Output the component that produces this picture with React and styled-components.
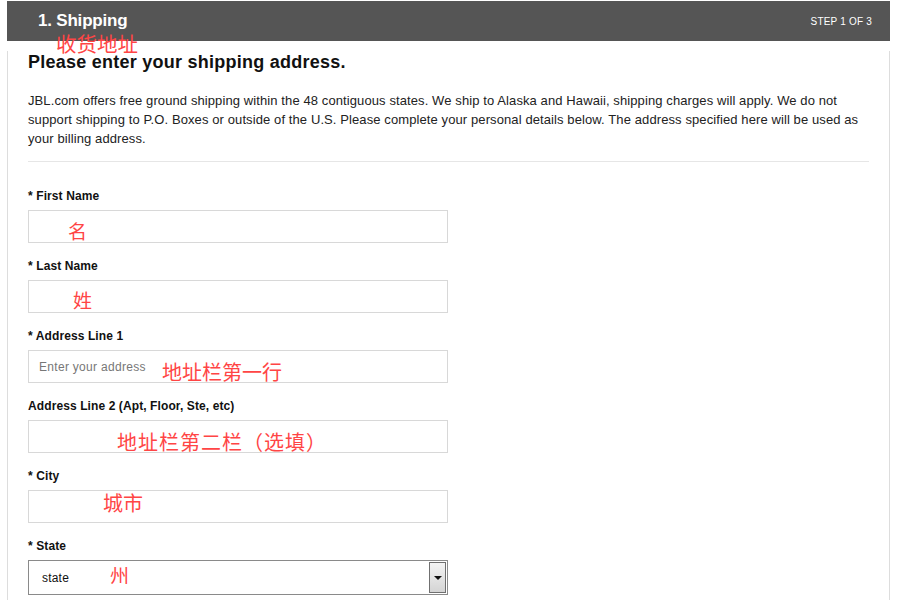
import React from 'react';
import styled, { createGlobalStyle } from 'styled-components';

const GlobalStyle = createGlobalStyle`
  html, body {
    margin: 0;
    padding: 0;
    background: #fff;
  }
  body {
    font-family: "Liberation Sans", Arial, sans-serif;
    color: #1a1a1a;
  }
`;

const Page = styled.div`
  width: 883px;
  margin: 1px 0 0 7px;
`;

const Header = styled.div`
  height: 40px;
  background: #555;
  color: #fff;
  display: flex;
  align-items: center;
  justify-content: space-between;
  padding: 0 18px 0 31px;
  position: relative;
`;

const Title = styled.h2`
  margin: 0;
  font-size: 17px;
  font-weight: bold;
  letter-spacing: -0.2px;
`;

const Step = styled.span`
  font-size: 10px;
  letter-spacing: 0.2px;
`;

const Body = styled.div`
  border-left: 1px solid #ddd;
  border-right: 1px solid #ddd;
  padding: 0 20px 20px;
  position: relative;
`;

const Heading = styled.h1`
  margin: 10px 0 0;
  font-size: 18px;
  line-height: 22px;
  font-weight: bold;
  letter-spacing: 0.25px;
  color: #111;
`;

const Intro = styled.p`
  margin: 18px 0 0;
  font-size: 13px;
  line-height: 19px;
  color: #222;
  letter-spacing: 0.1px;
  white-space: nowrap;
`;

const Divider = styled.hr`
  margin: 13px 0 0;
  border: 0;
  border-top: 1px solid #e6e6e6;
`;

const Form = styled.form`
  margin-top: 26px;
  display: flex;
  flex-direction: column;
  gap: 15px;
`;

const Field = styled.div`
  position: relative;
  width: 420px;
  display: flex;
  flex-direction: column;
  gap: 6px;
`;

const Label = styled.label`
  font-size: 12px;
  line-height: 16px;
  font-weight: bold;
  letter-spacing: 0.1px;
  color: #111;
`;

const Input = styled.input`
  box-sizing: border-box;
  width: 420px;
  height: 33px;
  border: 1px solid #d8d8d8;
  padding: 0 10px;
  font-family: "Liberation Sans", Arial, sans-serif;
  font-size: 12px;
  letter-spacing: 0.3px;
  color: #222;
  outline: none;

  &::placeholder {
    color: #777;
  }
`;

const Select = styled.div`
  box-sizing: border-box;
  width: 420px;
  height: 35px;
  border: 1px solid #8a8a8a;
  display: flex;
  align-items: stretch;
  font-size: 12px;
  color: #111;
`;

const SelectValue = styled.span`
  flex: 1;
  display: flex;
  align-items: center;
  padding-left: 13px;
  letter-spacing: 0.2px;
`;

const SelectButton = styled.span`
  width: 15px;
  margin: 1px;
  border: 1px solid #707070;
  background: linear-gradient(#f4f4f4, #d4d4d4);
  display: flex;
  align-items: center;
  justify-content: center;

  &::after {
    content: '';
    border-left: 4px solid transparent;
    border-right: 4px solid transparent;
    border-top: 4px solid #111;
  }
`;

const Note = styled.span`
  position: absolute;
  left: ${({ x }) => x}px;
  top: ${({ y }) => y}px;
  font-family: "Noto Sans CJK SC", sans-serif;
  font-size: ${({ size }) => size || 20}px;
  letter-spacing: ${({ spacing }) => spacing || 0}px;
  line-height: 1;
  color: #ff4545;
  pointer-events: none;
  white-space: nowrap;
`;

const fields = [
  { label: '* First Name', note: '名', x: 40, y: 33, size: 19 },
  { label: '* Last Name', note: '姓', x: 45, y: 32, size: 19 },
  { label: '* Address Line 1', note: '地址栏第一行', x: 134, y: 34, placeholder: 'Enter your address' },
  { label: 'Address Line 2 (Apt, Floor, Ste, etc)', note: '地址栏第二栏（选填）', x: 89, y: 34, spacing: 1 },
  { label: '* City', note: '城市', x: 75, y: 25 },
];

const App = () => (
  <Page>
    <GlobalStyle />
    <Header>
      <Title>1. Shipping</Title>
      <Step>STEP 1 OF 3</Step>
      <Note x={49} y={32} size={20.5}>收货地址</Note>
    </Header>
    <Body>
      <Heading>Please enter your shipping address.</Heading>
      <Intro>
        JBL.com offers free ground shipping within the 48 contiguous states. We ship to Alaska and Hawaii, shipping charges will apply. We do not
        <br />
        support shipping to P.O. Boxes or outside of the U.S. Please complete your personal details below. The address specified here will be used as
        <br />
        your billing address.
      </Intro>
      <Divider />
      <Form>
        {fields.map((f) => (
          <Field key={f.label}>
            <Label>{f.label}</Label>
            <Input placeholder={f.placeholder} />
            <Note x={f.x} y={f.y} size={f.size} spacing={f.spacing}>{f.note}</Note>
          </Field>
        ))}
        <Field>
          <Label>* State</Label>
          <Select>
            <SelectValue>state</SelectValue>
            <SelectButton />
          </Select>
          <Note x={82} y={27} size={19}>州</Note>
        </Field>
      </Form>
    </Body>
  </Page>
);

export default App;
